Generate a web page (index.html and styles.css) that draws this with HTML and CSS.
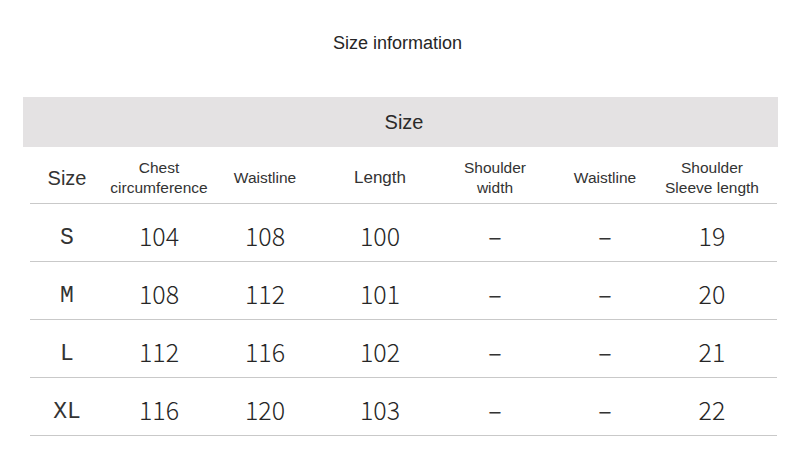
FILE: index.html
```html
<!DOCTYPE html>
<html>
<head>
<meta charset="utf-8">
<link rel="stylesheet" href="styles.css">
</head>
<body>
<div class="page">
  <h1 class="title">Size information</h1>
  <div class="band">Size</div>
  <div class="table">
    <div class="row head">
      <div class="cell big">Size</div>
      <div class="cell">Chest<br>circumference</div>
      <div class="cell">Waistline</div>
      <div class="cell big2">Length</div>
      <div class="cell">Shoulder<br>width</div>
      <div class="cell">Waistline</div>
      <div class="cell">Shoulder<br>Sleeve length</div>
    </div>
    <div class="row data">
      <div class="cell sz">S</div>
      <div class="cell">104</div>
      <div class="cell">108</div>
      <div class="cell">100</div>
      <div class="cell dash">–</div>
      <div class="cell dash">–</div>
      <div class="cell">19</div>
    </div>
    <div class="row data">
      <div class="cell sz">M</div>
      <div class="cell">108</div>
      <div class="cell">112</div>
      <div class="cell">101</div>
      <div class="cell dash">–</div>
      <div class="cell dash">–</div>
      <div class="cell">20</div>
    </div>
    <div class="row data">
      <div class="cell sz">L</div>
      <div class="cell">112</div>
      <div class="cell">116</div>
      <div class="cell">102</div>
      <div class="cell dash">–</div>
      <div class="cell dash">–</div>
      <div class="cell">21</div>
    </div>
    <div class="row data">
      <div class="cell sz">XL</div>
      <div class="cell">116</div>
      <div class="cell">120</div>
      <div class="cell">103</div>
      <div class="cell dash">–</div>
      <div class="cell dash">–</div>
      <div class="cell">22</div>
    </div>
  </div>
</div>
</body>
</html>
```
FILE: styles.css
```css
html, body {
  margin: 0;
  padding: 0;
  background: #ffffff;
}
.page {
  width: 800px;
  height: 457px;
  overflow: hidden;
  font-family: "Liberation Sans", Arial, sans-serif;
  color: #2b2b2b;
}
.title {
  margin: 0;
  padding: 33px 5px 0 0;
  font-size: 18px;
  font-weight: normal;
  line-height: 20px;
  text-align: center;
  color: #262626;
}
.band {
  margin: 44px 22px 0 23px;
  height: 50px;
  line-height: 50px;
  background: #e4e2e3;
  font-size: 20px;
  text-align: center;
  padding-left: 7px;
  color: #2a2a2a;
}
.table {
  margin: 0 23px 0 30px;
}
.row {
  display: grid;
  grid-template-columns: 74px 110px 102px 128px 102px 118px 96px;
  padding-right: 17px;
  border-bottom: 1px solid #c9c9c9;
  align-items: center;
}
.cell {
  text-align: center;
  white-space: nowrap;
}
.head {
  height: 50px;
  padding-top: 6px;
  font-size: 15.5px;
  line-height: 20px;
  color: #333333;
}
.head .big {
  font-size: 20px;
}
.head .big2 {
  font-size: 17px;
}
.data {
  height: 53px;
  padding-top: 4px;
  font-family: "Noto Sans CJK SC", "Noto Sans", sans-serif;
  font-weight: 300;
  font-size: 25px;
  line-height: 30px;
  color: #262626;
}
.data .sz {
  padding-top: 6px;
  font-family: "Liberation Mono", monospace;
  font-weight: normal;
  font-size: 23px;
  color: #333333;
}
.data .dash {
  font-weight: 400;
  color: #333333;
}
```
